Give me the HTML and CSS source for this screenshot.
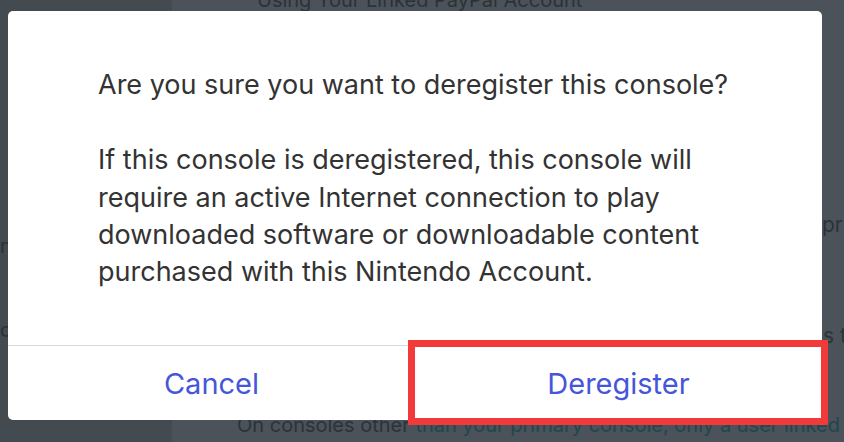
FILE: index.html
```html
<!DOCTYPE html>
<html lang="en">
<head>
<meta charset="utf-8">
<title>Deregister console</title>
<link rel="stylesheet" href="styles.css">
</head>
<body>
<div class="page">
  <aside class="side">
    <div class="bg-line side-n">n</div>
    <div class="bg-line side-o">o</div>
  </aside>
  <main class="main">
    <div class="bg-line bg-heading">Using Your Linked PayPal Account</div>
    <div class="bg-line frag-pr">pr</div>
    <div class="bg-line frag-st">s t</div>
    <div class="bg-line bottom-line">On consoles other <span class="teal">than your primary console, only a user linked</span></div>
  </main>
</div>

<div class="dialog" role="dialog">
  <div class="dialog-body">
    <p class="title">Are you sure you want to deregister this console?</p>
    <p class="message">If this console is deregistered, this console will<br>require an active Internet connection to play<br>downloaded software or downloadable content<br>purchased with this Nintendo Account.</p>
  </div>
  <div class="dialog-actions">
    <button class="action">Cancel</button>
    <button class="action highlighted">Deregister<span class="highlight-box"></span></button>
  </div>
</div>
</body>
</html>
```

FILE: styles.css
```css
html, body {
  margin: 0;
  padding: 0;
}

body {
  width: 844px;
  height: 442px;
  overflow: hidden;
  position: relative;
  font-family: Inter, "DejaVu Sans", sans-serif;
  background: #4b5259;
}

.page {
  display: flex;
  height: 442px;
  color: #2c3237;
}

.side {
  width: 172px;
  flex: none;
  background: #434a50;
}

.main {
  flex: 1;
  background: #4b5259;
  overflow: hidden;
}

.bg-line {
  font-size: 20px;
  line-height: 28px;
  height: 28px;
  white-space: nowrap;
}

.bg-heading {
  margin-top: -14px;
  padding-left: 85px;
}

.side-n { margin-top: 232px; }
.side-o { margin-top: 56px; }

.frag-pr { margin-top: 197px; padding-left: 650px; font-size: 21px; }
.frag-st { margin-top: 83px; padding-left: 651px; font-size: 21px; }
.bottom-line { margin-top: 61px; padding-left: 65px; }

.teal { color: #1f474d; }

.dialog {
  position: absolute;
  left: 8px;
  top: 11px;
  width: 814px;
  height: 409px;
  background: #fff;
  border-radius: 5px;
  display: flex;
  flex-direction: column;
}

.dialog-body {
  flex: 1;
  padding: 55px 40px 0 90px;
  color: #333;
  font-size: 27px;
  line-height: 37.3px;
}

.dialog-body p {
  margin: 0;
}

.dialog-body .message {
  margin-top: 38px;
}

.dialog-actions {
  height: 74px;
  border-top: 1px solid #d9d9d9;
  display: flex;
}

.action {
  flex: 1;
  position: relative;
  border: 0;
  background: transparent;
  font-family: inherit;
  font-size: 29px;
  color: #4556d8;
  padding: 0;
  cursor: pointer;
}

.highlight-box {
  position: absolute;
  top: -6px;
  left: -7px;
  right: -6px;
  bottom: -5px;
  border: 7px solid #f23a3a;
  pointer-events: none;
}
```
